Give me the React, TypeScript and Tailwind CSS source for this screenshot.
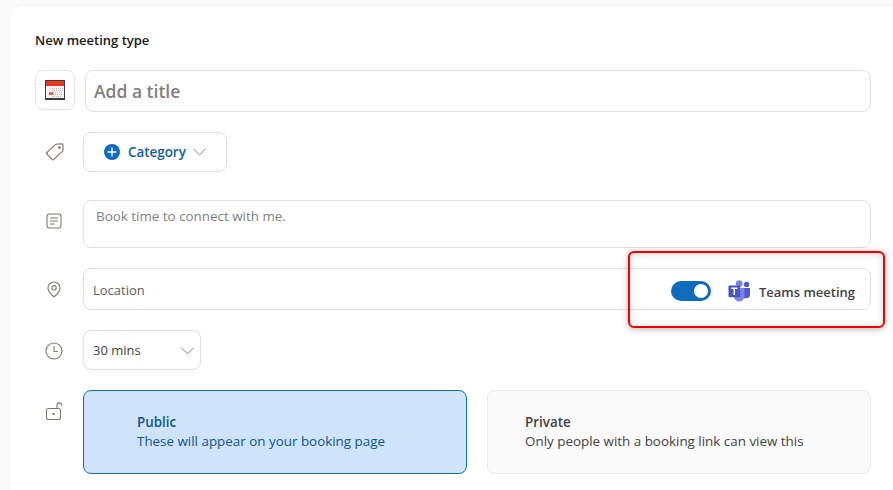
import React from "react";

const Icon = ({ children, top = false, size = 20 }: { children: React.ReactNode; top?: boolean; size?: number }) => (
  <div className={top ? "w-[48px] shrink-0 flex items-start pl-[9px] pt-[11px]" : "w-[48px] shrink-0 flex items-center pl-[9px]"}>
    <svg width={size} height={size} viewBox="0 0 20 20" fill="none" stroke="#80796f" strokeWidth="1.1" strokeLinecap="round" strokeLinejoin="round">
      {children}
    </svg>
  </div>
);

const Chevron = () => (
  <svg width="15" height="8" viewBox="0 0 15 8" fill="none" stroke="#7d8794" strokeWidth="1" strokeLinecap="round" strokeLinejoin="round">
    <path d="M1.500 1 7.500 6.800 13.500 1" />
  </svg>
);

const Calendar = () => (
  <svg width="20" height="20" viewBox="0 0 20 20" shapeRendering="crispEdges">
    <rect x="0" y="0" width="20" height="20" fill="#3c3c3c" />
    <rect x="1" y="1" width="18" height="17" fill="#f6f4f2" />
    <rect x="1" y="1" width="18" height="5" fill="#e8391f" />
    <path d="M7 8h11M7 10h11M4 12h14M4 14h14M7 16h9" stroke="#b4b4b4" strokeWidth="1" strokeDasharray="1 1" />
    <rect x="4" y="12" width="4" height="3" fill="#e8604a" />
  </svg>
);

const TeamsLogo = () => (
  <svg width="23" height="22" viewBox="0 0 23 22">
    <circle cx="18.600" cy="4.400" r="2.700" fill="#5059c9" />
    <path d="M14 8h8v6.600a3.600 3.600 0 0 1-3.600 3.600H17a3 3 0 0 1-3-3Z" fill="#5059c9" />
    <circle cx="11.200" cy="3.600" r="3.400" fill="#7b83eb" />
    <path d="M6 8h10.400v8.200a5.200 5.200 0 0 1-10.400 0Z" fill="#7b83eb" />
    <rect x="0.500" y="5.600" width="11.600" height="11.600" rx="1" fill="#4b53bc" />
    <path d="M3.200 8.200h6.200M6.300 8.200v6.800" stroke="#fff" strokeWidth="1.500" fill="none" />
  </svg>
);

export default function App() {
  return (
    <div className="relative h-[490px] w-[893px] overflow-hidden bg-[#fafafa] font-['Open_Sans',sans-serif] text-[13px] text-[#424242]">
      <div className="ml-[11px] mt-[6px] h-[500px] rounded-tl-[12px] bg-white pl-[24px] pr-[22px] pt-[25px] shadow-[0_0_2px_rgba(0,0,0,0.04)]">
        <h1 className="h-[18px] text-[13px] font-semibold leading-[18px] text-[#1a1a1a]">New meeting type</h1>

        <div className="mt-[21px] flex gap-[10px]">
          <div className="flex h-[40px] w-[40px] items-center justify-center rounded-[8px] border border-[#e4e4e4]">
            <Calendar />
          </div>
          <div className="flex h-[42px] flex-1 items-center rounded-[8px] border border-[#e0e0e0] pl-[8px] text-[17.500px] font-semibold text-[#7f7f7f]">
            Add a title
          </div>
        </div>

        <div className="mt-[20px] flex h-[40px]">
          <Icon size={22}>
            <path d="M2 11 10.300 3.300c.4-.4.8-.5 1.300-.5l4.600-.1c.6 0 1 .4 1 1l.1 4.400c0 .5-.2 1-.6 1.300l-7.800 7.300c-.5.5-1.200.5-1.700 0l-4.200-4.500c-.5-.4-.4-.8 0-1.200Z" />
            <circle cx="14" cy="6" r="0.700" />
          </Icon>
          <div className="flex w-[144px] items-center rounded-[8px] border border-[#e0e0e0] pl-[20px]">
            <span className="flex h-[16px] w-[16px] items-center justify-center rounded-full bg-[#0f6cbd]">
              <svg width="10" height="10" viewBox="0 0 10 10" stroke="#fff" strokeWidth="1.400">
                <path d="M5 .5v9M.5 5h9" />
              </svg>
            </span>
            <span className="ml-[8px] text-[13.400px] font-semibold text-[#115ea3]">Category</span>
            <span className="ml-[6px] flex"><Chevron /></span>
          </div>
        </div>

        <div className="mt-[28px] flex h-[48px]">
          <Icon top>
            <rect x="3" y="3" width="14" height="14" rx="2.400" />
            <path d="M6.500 7h7M6.500 10h7M6.500 13h4" />
          </Icon>
          <div className="flex-1 rounded-[8px] border border-[#e0e0e0] pl-[12px] pt-[5px] text-[13.400px] text-[#7f7f7f]">
            Book time to connect with me.
          </div>
        </div>

        <div className="mt-[20px] flex h-[42px]">
          <Icon>
            <path d="M10 18c-1-1.200-6-4.600-6-9a6 6 0 0 1 12 0c0 4.400-5 7.800-6 9Z" />
            <circle cx="10" cy="8.800" r="2.200" />
          </Icon>
          <div className="flex flex-1 items-center rounded-[8px] border border-[#e0e0e0] pl-[9px] pr-[15px] pt-[4px]">
            <span className="text-[#616161]">Location</span>
            <div className="ml-auto flex h-[20px] w-[40px] items-center justify-end rounded-full bg-[#0f6cbd] pr-[3px]">
              <span className="h-[14px] w-[14px] rounded-full bg-white" />
            </div>
            <span className="ml-[17px] flex"><TeamsLogo /></span>
            <span className="ml-[8px] mt-[4px] font-semibold text-[#424242]">Teams meeting</span>
          </div>
        </div>

        <div className="mt-[20px] flex h-[40px]">
          <Icon>
            <circle cx="10" cy="11" r="8" />
            <path d="M10 6.500V11.500h3.500" />
          </Icon>
          <div className="flex w-[118px] items-center justify-between rounded-[8px] border border-[#e0e0e0] pl-[9px] pr-[5px] pt-[2px] text-[#424242]">
            30 mins
            <Chevron />
          </div>
        </div>

        <div className="mt-[20px] flex">
          <Icon top>
            <rect x="2.500" y="7.500" width="14" height="11" rx="2" />
            <path d="M13 7.500V4.200a2.300 2.300 0 0 1 4.600 0" />
            <circle cx="9.500" cy="13" r="0.600" fill="#80796f" />
          </Icon>
          <div className="grid flex-1 grid-cols-2 gap-[20px]">
            <div className="flex h-[84px] flex-col justify-center rounded-[8px] border border-[#0f6cbd] bg-[#cfe4fa] pl-[53px] text-[13.400px] text-[#0f548c]">
              <span className="font-semibold leading-[19px]">Public</span>
              <span className="leading-[19px]">These will appear on your booking page</span>
            </div>
            <div className="flex h-[84px] flex-col justify-center rounded-[8px] border border-[#ebebeb] bg-[#fafafa] pl-[37px] text-[13.400px]">
              <span className="font-semibold leading-[19px]">Private</span>
              <span className="leading-[19px]">Only people with a booking link can view this</span>
            </div>
          </div>
        </div>
      </div>

      <div className="absolute left-[628px] top-[251px] h-[77px] w-[257px] rounded-[6px] border-2 border-[#f00000] shadow-[0_1px_6px_rgba(0,0,0,0.3),inset_0_1px_6px_rgba(0,0,0,0.2)]" />
    </div>
  );
}
